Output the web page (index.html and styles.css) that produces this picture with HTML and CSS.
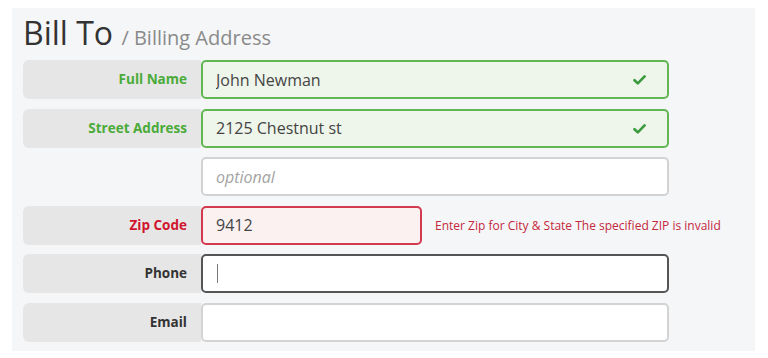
FILE: index.html
```html
<!DOCTYPE html>
<html lang="en">
<head>
    <meta charset="UTF-8">
    <title>Bill To</title>
    <link rel="stylesheet" href="styles.css">
</head>
<body>

    <div class="panel">
        <h1>Bill To <span class="sub">/ Billing Address</span></h1>

        <div class="row">
            <label class="label valid" for="full-name">Full Name</label>
            <div class="field">
                <input class="input is-valid" id="full-name" type="text" value="John Newman">
                <svg class="check" width="13" height="10" viewBox="0 0 13 10"><path d="M1.5 5.2 L4.8 8.4 L11.6 1.4" fill="none" stroke="#3b9a3e" stroke-width="2.6" stroke-linecap="round" stroke-linejoin="round"/></svg>
            </div>
        </div>

        <div class="row">
            <label class="label valid" for="street">Street Address</label>
            <div class="field">
                <input class="input is-valid" id="street" type="text" value="2125 Chestnut st">
                <svg class="check" width="13" height="10" viewBox="0 0 13 10"><path d="M1.5 5.2 L4.8 8.4 L11.6 1.4" fill="none" stroke="#3b9a3e" stroke-width="2.6" stroke-linecap="round" stroke-linejoin="round"/></svg>
            </div>
        </div>

        <div class="row no-label">
            <div class="field">
                <input class="input" id="street2" type="text" placeholder="optional">
            </div>
        </div>

        <div class="row">
            <label class="label error" for="zip">Zip Code</label>
            <div class="field short">
                <input class="input is-error" id="zip" type="text" value="9412">
            </div>
            <span class="error-msg">Enter Zip for City &amp; State The specified ZIP is invalid</span>
        </div>

        <div class="row">
            <label class="label" for="phone">Phone</label>
            <div class="field">
                <input class="input is-focus" id="phone" type="text">
                <span class="caret"></span>
            </div>
        </div>

        <div class="row">
            <label class="label" for="email">Email</label>
            <div class="field">
                <input class="input" id="email" type="text">
            </div>
        </div>
    </div>

</body>
</html>
```

FILE: styles.css
```css
body {
    margin: 0;
    background-color: #fff;
    font-family: 'Open Sans', 'Liberation Sans', sans-serif;
    color: #333;
}
.panel {
    margin: 8px 0 0 12px;
    width: 732px;
    height: 338px;
    padding: 5px 0 0 11px;
    background-color: #f5f6f8;
}
h1 {
    margin: 0 0 7px;
    height: 40px;
    font-size: 32px;
    font-weight: normal;
    line-height: 40px;
    color: #333;
}
h1 .sub {
    font-size: 20px;
    line-height: 1;
    color: #8a8a8a;
}
.row {
    display: flex;
    align-items: center;
    height: 39px;
    margin-bottom: 9.5px;
}
.label {
    width: 164px;
    height: 39px;
    line-height: 39px;
    padding-right: 14px;
    text-align: right;
    font-size: 13.5px;
    font-weight: bold;
    color: #333;
    background-color: #e6e6e6;
    border-radius: 6px 0 0 6px;
}
.no-label {
    padding-left: 178px;
}
.label.valid {
    color: #4aab38;
}
.label.error {
    color: #d1152f;
}
.field {
    position: relative;
    width: 468px;
    height: 39px;
}
.field.short {
    width: 221px;
}
.input {
    width: 100%;
    height: 39px;
    box-sizing: border-box;
    padding: 0 13px;
    border: 2px solid #d3d3d3;
    border-radius: 5px;
    background-color: #fff;
    font-family: 'Open Sans', 'Liberation Sans', sans-serif;
    font-size: 16px;
    color: #444;
    outline: none;
}
.input::placeholder {
    font-style: italic;
    color: #a3a3a3;
}
.input.is-valid {
    border-color: #62b653;
    background-color: #eef5ea;
}
.input.is-error {
    border-color: #d33a50;
    background-color: #fbf1f1;
}
.input.is-focus {
    border-color: #555;
}
.check {
    position: absolute;
    right: 23px;
    top: 15px;
}
.caret {
    position: absolute;
    left: 16px;
    top: 10px;
    width: 1px;
    height: 19px;
    background-color: #777;
}
.error-msg {
    margin-left: 13px;
    font-size: 12px;
    color: #c4283c;
}
```
